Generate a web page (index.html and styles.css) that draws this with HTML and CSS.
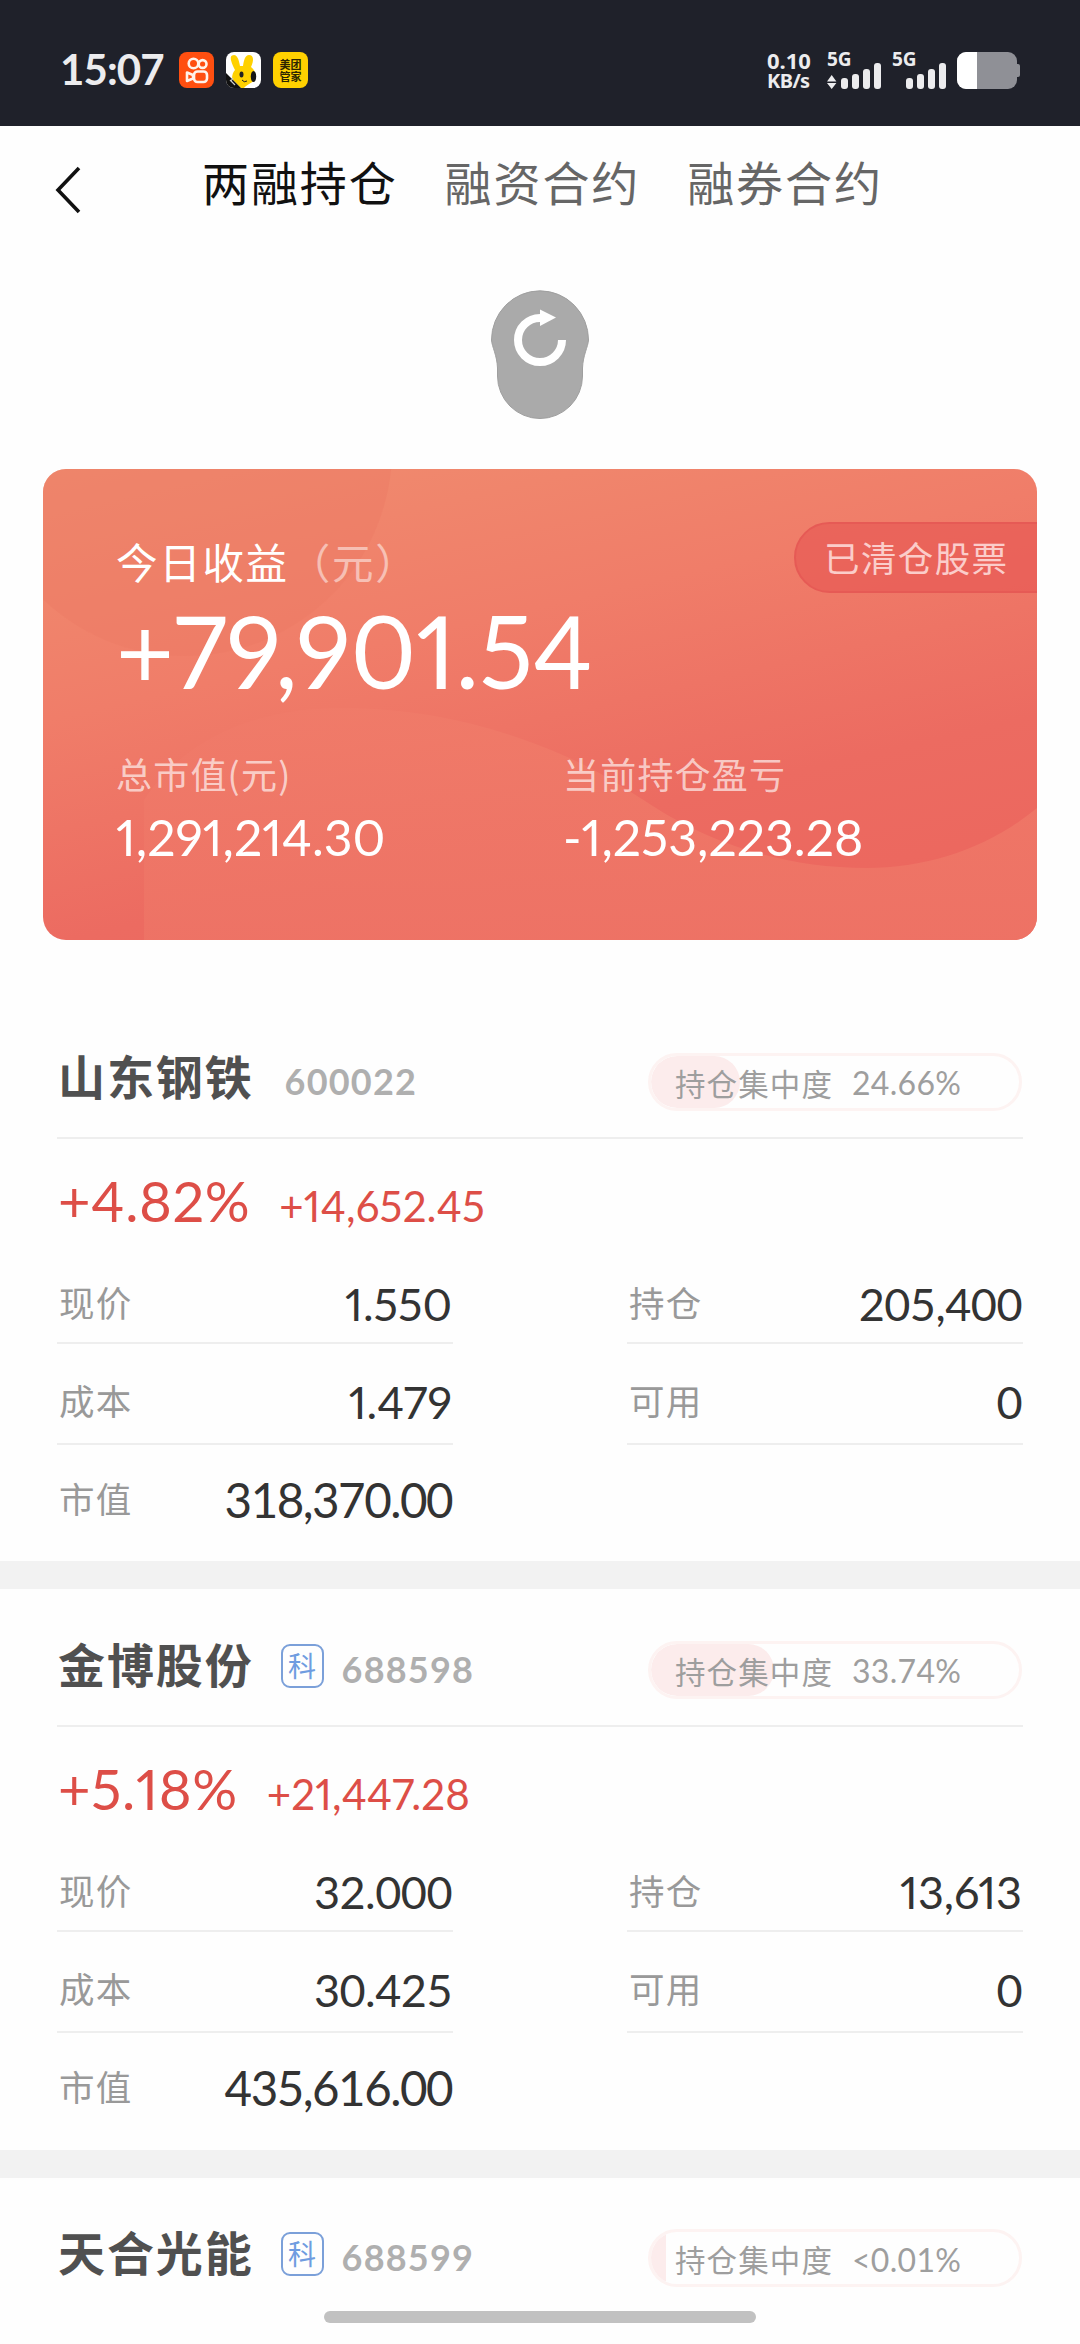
FILE: index.html
```html
<!DOCTYPE html>
<html lang="zh-CN">
<head>
    <meta charset="UTF-8">
    <meta name="viewport" content="width=device-width, initial-scale=1.0">
    <title>两融持仓</title>
    <link rel="stylesheet" href="styles.css">
</head>
<body>
    <div class="status-bar">
        <span class="time">15:07</span>
        <div class="app-icons">
            <svg width="35" height="36" viewBox="0 0 35 36">
                <rect width="35" height="36" rx="8" fill="#ff4f10"/>
                <g fill="none" stroke="#fff3ea" stroke-width="2.6">
                    <circle cx="14.5" cy="11.5" r="4.8"/>
                    <circle cx="23.6" cy="12" r="3.9"/>
                    <rect x="15" y="19.5" width="13" height="10.5" rx="3.5"/>
                    <path d="M8 20.5v8.5l6-2.5v-3.5z" stroke-linejoin="round"/>
                </g>
            </svg>
            <svg width="35" height="36" viewBox="0 0 35 36">
                <clipPath id="app"><rect width="35" height="36" rx="8"/></clipPath>
                <g clip-path="url(#app)">
                    <rect width="35" height="36" fill="#fff"/>
                    <path d="M9 18C6 12 3 5 6 3.500C11 1 13 8 14 14H17C18 8 19 3 23 3C28 3 28 9 25 15C29 18 30 22 29 28C26 31 20 33 18 36H15L6 27C6 23 7 20 9 18Z" fill="#ffd100"/>
                    <path d="M0 21L15 36H0z" fill="#111"/>
                    <path d="M4 28l5 5M7 26l-2 3" stroke="#ccc" stroke-width="1.200"/>
                    <ellipse cx="15.500" cy="22.500" rx="2" ry="3" fill="#222"/>
                    <ellipse cx="27.500" cy="24.500" rx="2.700" ry="5.500" fill="#161616"/>
                    <path d="M16 28q2 3 5 1" fill="none" stroke="#222" stroke-width="1"/>
                </g>
            </svg>
            <span class="app-text">美团<br>管家</span>
        </div>
        <div class="speed"><span>0.10</span><span class="unit">KB/s</span></div>
        <div class="signal">
            <span>5G</span>
            <svg width="55" height="26" viewBox="0 0 55 26" fill="#ececee">
                <path d="M0 18.500L4.700 12l4.700 6.500zM0 20h9.400l-4.700 6z"/>
                <rect x="14" y="15" width="7" height="11" rx="3"/>
                <rect x="25" y="11" width="7" height="15" rx="3"/>
                <rect x="36" y="6" width="7" height="20" rx="3"/>
                <rect x="47" y="0" width="7" height="26" rx="3"/>
            </svg>
        </div>
        <div class="signal">
            <span>5G</span>
            <svg width="55" height="26" viewBox="0 0 55 26" fill="#ececee">
                <rect x="14" y="15" width="7" height="11" rx="3"/>
                <rect x="25" y="11" width="7" height="15" rx="3"/>
                <rect x="36" y="6" width="7" height="20" rx="3"/>
                <rect x="47" y="0" width="7" height="26" rx="3"/>
            </svg>
        </div>
        <svg class="battery" width="63" height="37" viewBox="0 0 63 37">
            <clipPath id="bat"><rect width="60" height="37" rx="9"/></clipPath>
            <rect x="56" y="12" width="7" height="13" rx="2" fill="#8f9096"/>
            <g clip-path="url(#bat)">
                <rect width="60" height="37" fill="#8f9096"/>
                <rect width="20" height="37" fill="#fff"/>
            </g>
        </svg>
    </div>

    <div class="nav">
        <svg class="back" width="26" height="48" viewBox="0 0 26 48">
            <path d="M24 2L3 24L24 46" fill="none" stroke="#111" stroke-width="3.600"/>
        </svg>
        <span class="tab active">两融持仓</span>
        <span class="tab">融资合约</span>
        <span class="tab">融券合约</span>
    </div>

    <div class="refresh">
        <svg width="100" height="130" viewBox="-50 -50 100 130">
            <path d="M-48.500 0A48.500 49.200 0 0 1 48.500 0C48 7 43 15 42.500 28V36A42.500 42.500 0 0 1 -42.500 36V28C-43 15 -48 7 -48.500 0Z" fill="#aaa" stroke="#9f9f9f" stroke-width="1"/>
            <path d="M22 0A22 22 0 1 1 0 -22H2" fill="none" stroke="#fff" stroke-width="8"/>
            <path d="M0 -30.500L16 -22.500L0 -14z" fill="#fff"/>
        </svg>
    </div>

    <div class="card">
        <svg class="card-bg" width="994" height="471" viewBox="43 469 994 471">
            <defs>
                <linearGradient id="wave" x1="0" y1="0" x2="0" y2="1">
                    <stop offset="0" stop-color="#f07b69"/>
                    <stop offset="1" stop-color="#ee7466"/>
                </linearGradient>
            </defs>
            <circle cx="185" cy="449" r="207" fill="#ed7a64" fill-opacity=".42"/>
            <path d="M144 940V800C190 730 270 708 340 708C430 708 500 728 565 756C620 780 650 808 690 827C740 852 800 868 867 868C930 868 990 847 1037 808V940Z" fill="url(#wave)" fill-opacity=".85"/>
        </svg>
        <div class="cleared">已清仓股票</div>
        <div class="today-label">今日收益<span>（元）</span></div>
        <div class="today-value">+79,901.54</div>
        <div class="totals">
            <div>
                <div class="total-label">总市值(元)</div>
                <div class="total-value">1,291,214.30</div>
            </div>
            <div>
                <div class="total-label">当前持仓盈亏</div>
                <div class="total-value">-1,253,223.28</div>
            </div>
        </div>
    </div>

    <div class="stock">
        <div class="stock-head">
            <span class="name">山东钢铁</span>
            <span class="code">600022</span>
            <div class="ratio">
                <div class="ratio-fill" style="width: 24.3%"></div>
                <span class="ratio-label">持仓集中度</span>
                <span class="ratio-value">24.66%</span>
            </div>
        </div>
        <div class="change">
            <span class="percent">+4.82%</span>
            <span class="amount">+14,652.45</span>
        </div>
        <div class="details">
            <div class="row"><span>现价</span><b class="narrow">1.550</b></div>
            <div class="row"><span>持仓</span><b>205,400</b></div>
            <div class="row"><span>成本</span><b class="narrow">1.479</b></div>
            <div class="row"><span>可用</span><b>0</b></div>
            <div class="row last"><span>市值</span><b>318,370.00</b></div>
        </div>
    </div>

    <div class="stock">
        <div class="stock-head">
            <span class="name">金博股份</span>
            <span class="board">科</span>
            <span class="code">688598</span>
            <div class="ratio">
                <div class="ratio-fill" style="width: 33.3%"></div>
                <span class="ratio-label">持仓集中度</span>
                <span class="ratio-value">33.74%</span>
            </div>
        </div>
        <div class="change">
            <span class="percent">+5.18%</span>
            <span class="amount">+21,447.28</span>
        </div>
        <div class="details">
            <div class="row"><span>现价</span><b>32.000</b></div>
            <div class="row"><span>持仓</span><b class="narrow">13,613</b></div>
            <div class="row"><span>成本</span><b>30.425</b></div>
            <div class="row"><span>可用</span><b>0</b></div>
            <div class="row last"><span>市值</span><b>435,616.00</b></div>
        </div>
    </div>

    <div class="stock partial">
        <div class="stock-head">
            <span class="name">天合光能</span>
            <span class="board">科</span>
            <span class="code">688599</span>
            <div class="ratio">
                <div class="ratio-fill tiny" style="width: 4.2%"></div>
                <span class="ratio-label">持仓集中度</span>
                <span class="ratio-value">&lt;0.01%</span>
            </div>
        </div>
    </div>

    <div class="home-bar"></div>
</body>
</html>
```
FILE: styles.css
```css
* {
    box-sizing: border-box;
}
body {
    margin: 0;
    width: 1080px;
    height: 2344px;
    overflow: hidden;
    position: relative;
    background: #fefefe;
    font-family: Lato, "Noto Sans CJK SC", sans-serif;
    white-space: nowrap;
}
svg {
    display: block;
    flex: none;
}
.status-bar {
    height: 126px;
    background: #1f212a;
    color: #ececee;
    display: flex;
    align-items: flex-start;
    padding: 52px 60px 0;
}
.time {
    width: 119px;
    font-size: 42px;
    font-weight: bold;
    line-height: 34px;
    letter-spacing: -0.900px;
}
.app-icons {
    display: flex;
    gap: 12px;
    margin-right: auto;
}
.app-text {
    width: 35px;
    height: 36px;
    border-radius: 8px;
    background: #ffd100;
    color: #2b2400;
    font: bold 11px/12px "Noto Sans CJK SC", sans-serif;
    text-align: center;
    padding-top: 6px;
}
.speed {
    width: 60px;
    display: flex;
    flex-direction: column;
    font: bold 22px/16px "Noto Sans", sans-serif;
}
.speed .unit {
    font-size: 20px;
    line-height: 25px;
    letter-spacing: -0.600px;
}
.signal {
    width: 65px;
    height: 36px;
    display: flex;
    flex-direction: column;
}
.signal span {
    height: 11px;
    font: bold 19px/15px "Noto Sans", sans-serif;
}
.nav {
    height: 150px;
    display: flex;
    align-items: flex-start;
    padding: 0 0 0 55px;
}
.back {
    margin: 40px 121px 0 0;
}
.tab {
    margin-top: 22px;
    margin-right: 47px;
    font: 47px/66px "Noto Sans CJK SC", sans-serif;
    letter-spacing: 1.9px;
    color: #666;
}
.tab.active {
    color: #111;
}
.refresh {
    display: flex;
    justify-content: center;
    height: 193px;
    padding-top: 14px;
}
.card {
    position: relative;
    width: 994px;
    height: 471px;
    margin: 0 43px;
    padding: 65px 73px 0;
    border-radius: 23px;
    overflow: hidden;
    background: linear-gradient(167deg, #f08d6f 0%, #f07d69 36%, #ec6b61 68%, #ec655d 100%);
    color: #fff;
}
.card-bg {
    position: absolute;
    top: 0;
    left: 0;
}
.cleared {
    position: absolute;
    top: 53px;
    right: -4px;
    width: 247px;
    height: 71px;
    padding-left: 28px;
    border: 2px solid #e65a55;
    border-radius: 36px 0 0 36px;
    background: rgba(231, 86, 83, .62);
    color: #fbcdca;
    font: 35.500px/66px "Noto Sans CJK SC", sans-serif;
    letter-spacing: 1.400px;
}
.today-label {
    position: relative;
    font: 41.500px/54px "Noto Sans CJK SC", sans-serif;
    letter-spacing: 1.700px;
}
.today-label span {
    opacity: .5;
}
.today-value {
    position: relative;
    padding-top: 2px;
    font-size: 100px;
    line-height: 120px;
    font-variant-numeric: proportional-nums;
    letter-spacing: -0.200px;
}
.totals {
    position: relative;
    display: grid;
    grid-template-columns: 447px 1fr;
    padding-top: 38px;
}
.total-label {
    color: rgba(255, 255, 255, .65);
    font: 36px/50px "Noto Sans CJK SC", sans-serif;
    letter-spacing: 1.200px;
}
.total-value {
    padding-top: 3px;
    font-size: 50px;
    line-height: 72px;
    font-variant-numeric: proportional-nums;
}
.stock {
    height: 588.300px;
    padding: 27px 57px 0;
    border-bottom: 28.500px solid #f2f2f2;
}
.card + .stock {
    margin-top: 61px;
}
.stock-head {
    display: flex;
    align-items: center;
    height: 111px;
    border-bottom: 2px solid #eee;
}
.stock.partial {
    height: 165px;
    border-bottom: none;
}
.partial .stock-head {
    border-bottom-color: transparent;
}
.name {
    margin: 0 31px 16px 1px;
    font: bold 47px/60px "Noto Sans CJK SC", sans-serif;
    letter-spacing: 1.900px;
    color: #505050;
}
.board {
    width: 43px;
    height: 44px;
    margin: 0 18px 10px -4px;
    border: 2px solid #7ba0d9;
    border-radius: 9px;
    color: #6f9ce0;
    font: 28px/38px "Noto Sans CJK SC", sans-serif;
    text-align: center;
}
.code {
    margin-bottom: 4px;
    font-size: 36px;
    font-weight: bold;
    line-height: 44px;
    letter-spacing: 1.200px;
    color: #afafaf;
}
.ratio {
    position: relative;
    display: flex;
    align-items: center;
    width: 374px;
    height: 58px;
    margin-bottom: 2px;
    margin-left: auto;
    margin-right: 1px;
    padding-left: 24px;
    border: 3px solid #fdf3f2;
    border-radius: 29px;
    overflow: hidden;
    color: #9e9e9e;
}
.ratio-fill {
    position: absolute;
    left: 0;
    top: 0;
    height: 52px;
    border-radius: 26px;
    background: #fcecec;
}
.ratio-fill.tiny {
    border-radius: 0;
}
.ratio-label {
    position: relative;
    width: 177px;
    padding-top: 2px;
    font: 30.500px/48px "Noto Sans CJK SC", sans-serif;
    letter-spacing: 1.100px;
}
.ratio-value {
    position: relative;
    padding-top: 3px;
    font-size: 32px;
    line-height: 44px;
    letter-spacing: 0.300px;
}
.change {
    display: flex;
    align-items: baseline;
    gap: 29px;
    height: 121px;
    padding-top: 28px;
    padding-left: 1px;
    color: #dd4e47;
    font-variant-numeric: proportional-nums;
}
.percent {
    font-size: 56px;
    line-height: 68px;
    letter-spacing: 0.600px;
    font-kerning: none;
}
.amount {
    font-size: 42px;
    letter-spacing: 0.200px;
}
.details {
    display: grid;
    grid-template-columns: 396px 396px;
    grid-template-rows: 84px 101px 116px;
    justify-content: space-between;
}
.row {
    display: flex;
    align-items: center;
    justify-content: space-between;
    padding: 2px 1px 0 2px;
    border-bottom: 2px solid #eee;
}
.row:nth-child(3), .row:nth-child(4) {
    padding-top: 12px;
}
.row.last {
    padding-bottom: 12px;
    border-bottom: none;
}
.row span {
    font: 35.500px/48px "Noto Sans CJK SC", sans-serif;
    letter-spacing: 1.300px;
    color: #999;
}
.row b {
    padding-top: 4px;
    font-size: 45px;
    font-weight: normal;
    line-height: 54px;
    letter-spacing: -0.500px;
    color: #333;
}
.row b.narrow {
    font-variant-numeric: proportional-nums;
    letter-spacing: 0;
}
.row.last b {
    font-size: 47.500px;
    letter-spacing: -1.500px;
}
.home-bar {
    position: absolute;
    left: 324px;
    bottom: 21px;
    width: 432px;
    height: 12px;
    border-radius: 6px;
    background: #c1c1c1;
}
```
